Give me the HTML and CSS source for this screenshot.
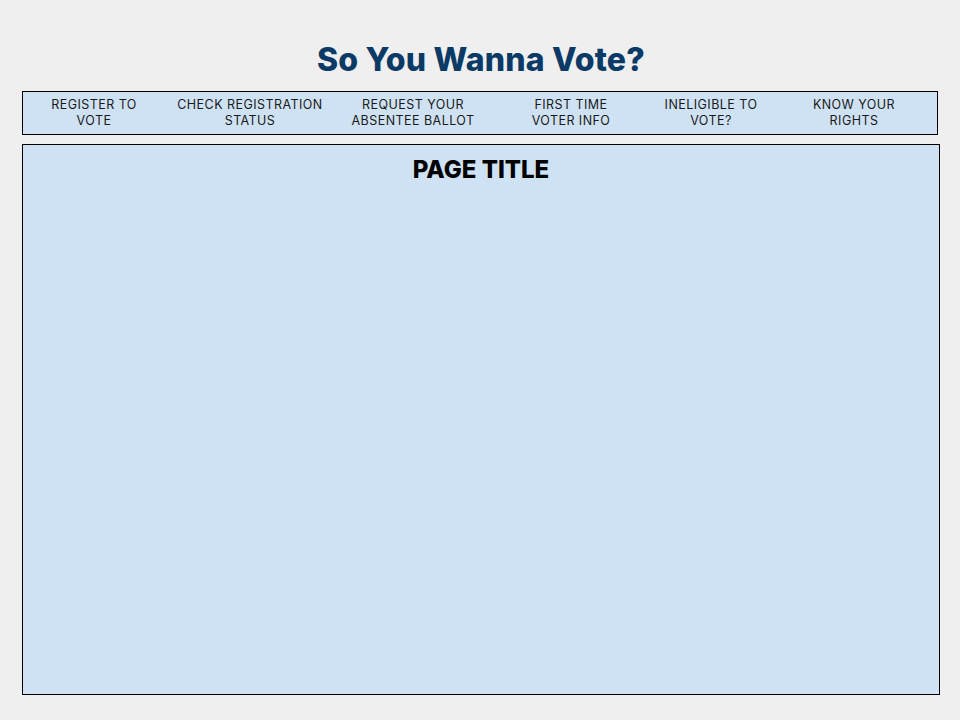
FILE: index.html
```html
<!DOCTYPE html>
<html>
<head>
<meta charset="utf-8">
<link rel="stylesheet" href="styles.css">
</head>
<body>
<header class="site-header">
  <h1 class="site-title">So You Wanna Vote?</h1>
</header>
<nav class="nav">
  <a class="nav-item">REGISTER TO<br>VOTE</a>
  <a class="nav-item">CHECK REGISTRATION<br>STATUS</a>
  <a class="nav-item">REQUEST YOUR<br>ABSENTEE BALLOT</a>
  <a class="nav-item">FIRST TIME<br>VOTER INFO</a>
  <a class="nav-item">INELIGIBLE TO<br>VOTE?</a>
  <a class="nav-item">KNOW YOUR<br>RIGHTS</a>
</nav>
<main class="content">
  <h2 class="page-title">PAGE TITLE</h2>
</main>
</body>
</html>
```
FILE: styles.css
```css
html, body {
  margin: 0;
  padding: 0;
  background: #efefef;
}
body {
  font-family: "Inter", "Liberation Sans", sans-serif;
  padding: 0 20px 0 22px;
  height: 720px;
  box-sizing: border-box;
}
.site-header {
  height: 91px;
  display: flex;
  justify-content: center;
  padding-top: 41px;
  box-sizing: border-box;
}
.site-title {
  margin: 0;
  font-size: 32px;
  line-height: 38px;
  font-weight: 800;
  color: #0b3a66;
  letter-spacing: 0.2px;
}
.nav {
  display: grid;
  grid-template-columns: 142px 170px 156px 160px 120px 1fr;
  width: 916px;
  height: 44px;
  box-sizing: border-box;
  border: 1px solid #000;
  background: #cfe2f3;
  align-items: center;
}
.nav-item {
  text-align: center;
  font-size: 12.5px;
  line-height: 16px;
  color: #1a1a1a;
  letter-spacing: 0.45px;
}
.content {
  margin-top: 9px;
  width: 918px;
  height: 551px;
  box-sizing: border-box;
  border: 1px solid #000;
  background: #cfe2f3;
  padding-top: 11px;
}
.page-title {
  margin: 0;
  text-align: center;
  font-size: 24px;
  font-weight: 800;
  color: #000;
  line-height: 28px;
}
```
